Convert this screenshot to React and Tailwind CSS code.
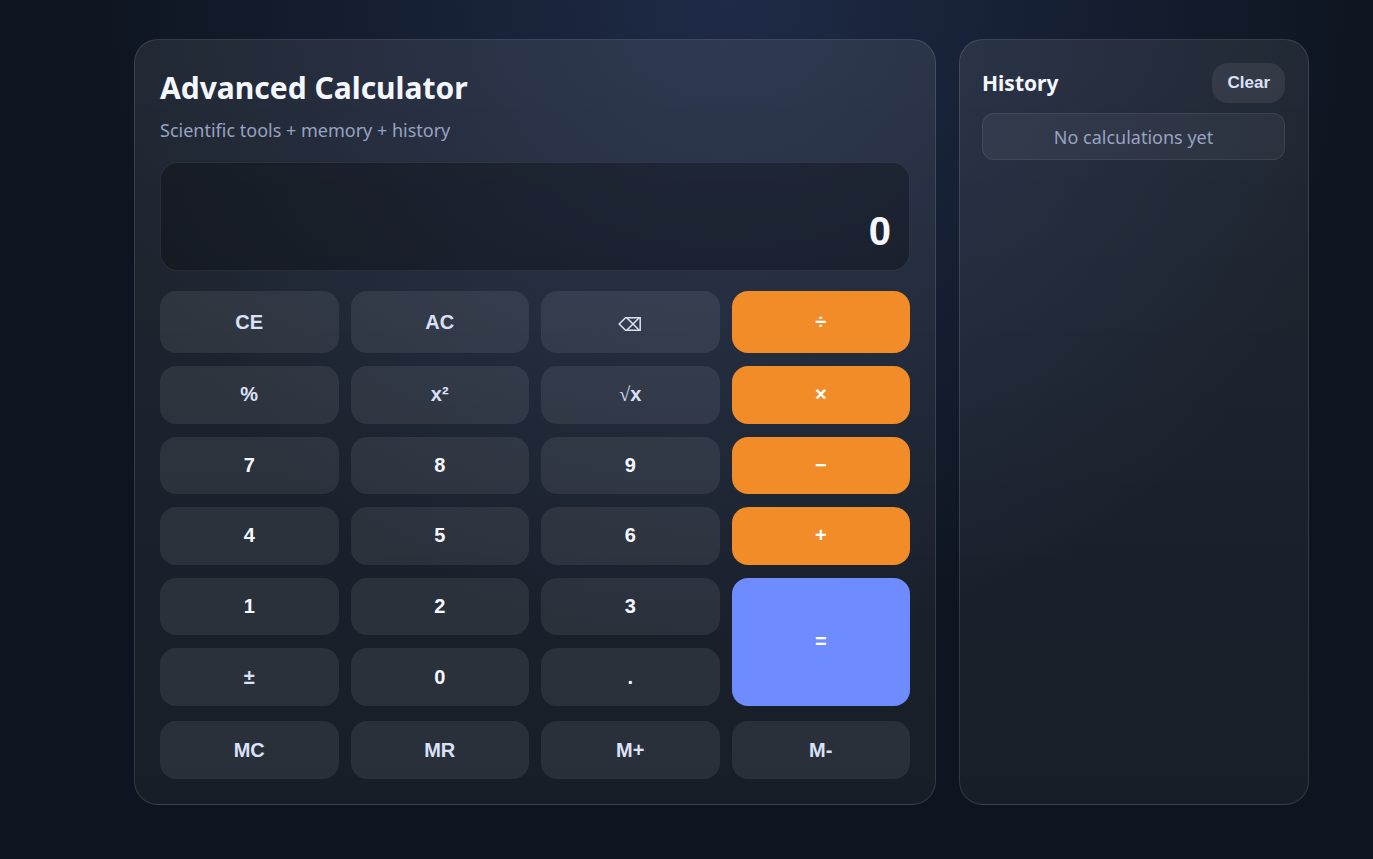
import { useState } from "react"

const keys = [
  { label: "CE", tone: "tool" },
  { label: "AC", tone: "tool" },
  { label: "⌫", tone: "tool", name: "Backspace" },
  { label: "÷", tone: "operator" },
  { label: "%", tone: "tool" },
  { label: "x²", tone: "tool" },
  { label: "√x", tone: "tool" },
  { label: "×", tone: "operator" },
  { label: "7" },
  { label: "8" },
  { label: "9" },
  { label: "−", tone: "operator" },
  { label: "4" },
  { label: "5" },
  { label: "6" },
  { label: "+", tone: "operator" },
  { label: "1" },
  { label: "2" },
  { label: "3" },
  { label: "=", tone: "equals" },
  { label: "±", tone: "tool" },
  { label: "0" },
  { label: "." },
]

const memoryKeys = ["MC", "MR", "M+", "M-"]

const tones = {
  number: "bg-white/8 text-[#f5f7ff]",
  tool: "bg-white/8 text-[#dbe1f8]",
  operator: "bg-[#f28c28] text-white",
  equals: "row-span-2 bg-[#6e8bff] text-white",
}

const cardStyle = "rounded-3xl border border-white/12 bg-linear-to-b from-white/8 to-white/4"

function KeyFace({ label }) {
  if (label === "⌫") return <BackspaceIcon />
  if (label === "√x") {
    return (
      <span>
        <span className="font-['Liberation_Serif',serif] font-normal">√</span>x
      </span>
    )
  }
  return label
}

function Key({ label, name, tone = "number", onClick }) {
  return (
    <button
      type="button"
      aria-label={name}
      onClick={() => onClick(label)}
      className={`flex items-center justify-center rounded-2xl pb-px font-['Liberation_Sans',Arial,sans-serif] text-xl font-bold hover:brightness-110 ${tones[tone]}`}
    >
      <KeyFace label={label} />
    </button>
  )
}

function BackspaceIcon() {
  return (
    <svg width="24" height="16" viewBox="0 0 24 16" fill="none" stroke="currentColor" strokeWidth="1.5" className="mt-1">
      <path d="M7.5 1.7H22.2V14.3H7.5L1.2 8Z" />
      <path d="M9 2l12 12M21 2L9 14" />
    </svg>
  )
}

export default function App() {
  const [display, setDisplay] = useState("0")
  const [history, setHistory] = useState([])

  const handleKey = (label) => {
    if (/^[0-9.]$/.test(label)) {
      setDisplay((d) => (d === "0" && label !== "." ? label : d + label))
    } else if (label === "AC" || label === "CE") {
      setDisplay("0")
    } else if (label === "⌫") {
      setDisplay((d) => d.slice(0, -1) || "0")
    } else if (label === "=") {
      setHistory((h) => [display, ...h])
    }
  }

  return (
    <div className="min-h-screen bg-[#0e1520] bg-[radial-gradient(circle_at_53%_0%,#1e2a46_0%,#0e1520_650px)] pt-[39px] pr-16 pb-[54px] pl-[134px] font-['Noto_Sans',sans-serif] text-[#f5f7ff]">
      <div className="grid grid-cols-[1fr_350px] gap-[23px]">
        <main className={`px-[25px] pt-7 pb-[25px] ${cardStyle}`}>
          <h1 className="text-[30px] leading-10 font-bold">Advanced Calculator</h1>
          <p className="mt-2 text-lg leading-7 text-[#98a2c3]">Scientific tools + memory + history</p>

          <div className="mt-[18px] flex h-[109px] flex-col items-end justify-end rounded-[18px] border border-white/8 bg-black/28 px-[18px] pb-[15px]">
            <output className="font-['Liberation_Sans',Arial,sans-serif] text-[40px] leading-12 font-bold">{display}</output>
          </div>

          <div className="mt-5 grid h-[415px] grid-cols-4 grid-rows-[62px_repeat(5,1fr)] gap-x-3 gap-y-[13px]">
            {keys.map((key) => (
              <Key key={key.label} {...key} onClick={handleKey} />
            ))}
          </div>
          <div className="mt-[15px] grid auto-rows-[58px] grid-cols-4 gap-3">
            {memoryKeys.map((label) => (
              <Key key={label} label={label} tone="tool" onClick={handleKey} />
            ))}
          </div>
        </main>

        <aside className={`pt-[23px] pr-[23px] pb-6 pl-[22px] ${cardStyle}`}>
          <div className="flex items-center justify-between">
            <h2 className="text-[21px] leading-8 font-bold">History</h2>
            <button
              type="button"
              onClick={() => setHistory([])}
              className="h-10 rounded-2xl bg-white/8 px-[15px] font-['Liberation_Sans',Arial,sans-serif] text-[17px] font-bold text-[#dbe1f8]"
            >
              Clear
            </button>
          </div>
          {history.length === 0 ? (
            <p className="mt-[10px] rounded-xl border border-white/8 bg-white/5 pt-[10px] pb-2 text-center text-lg leading-[27px] text-[#98a2c3]">
              No calculations yet
            </p>
          ) : (
            <ul className="mt-[10px] space-y-2">
              {history.map((item, i) => (
                <li key={i} className="rounded-xl border border-white/8 bg-white/5 px-4 py-[9px] text-right text-lg">
                  {item}
                </li>
              ))}
            </ul>
          )}
        </aside>
      </div>
    </div>
  )
}
